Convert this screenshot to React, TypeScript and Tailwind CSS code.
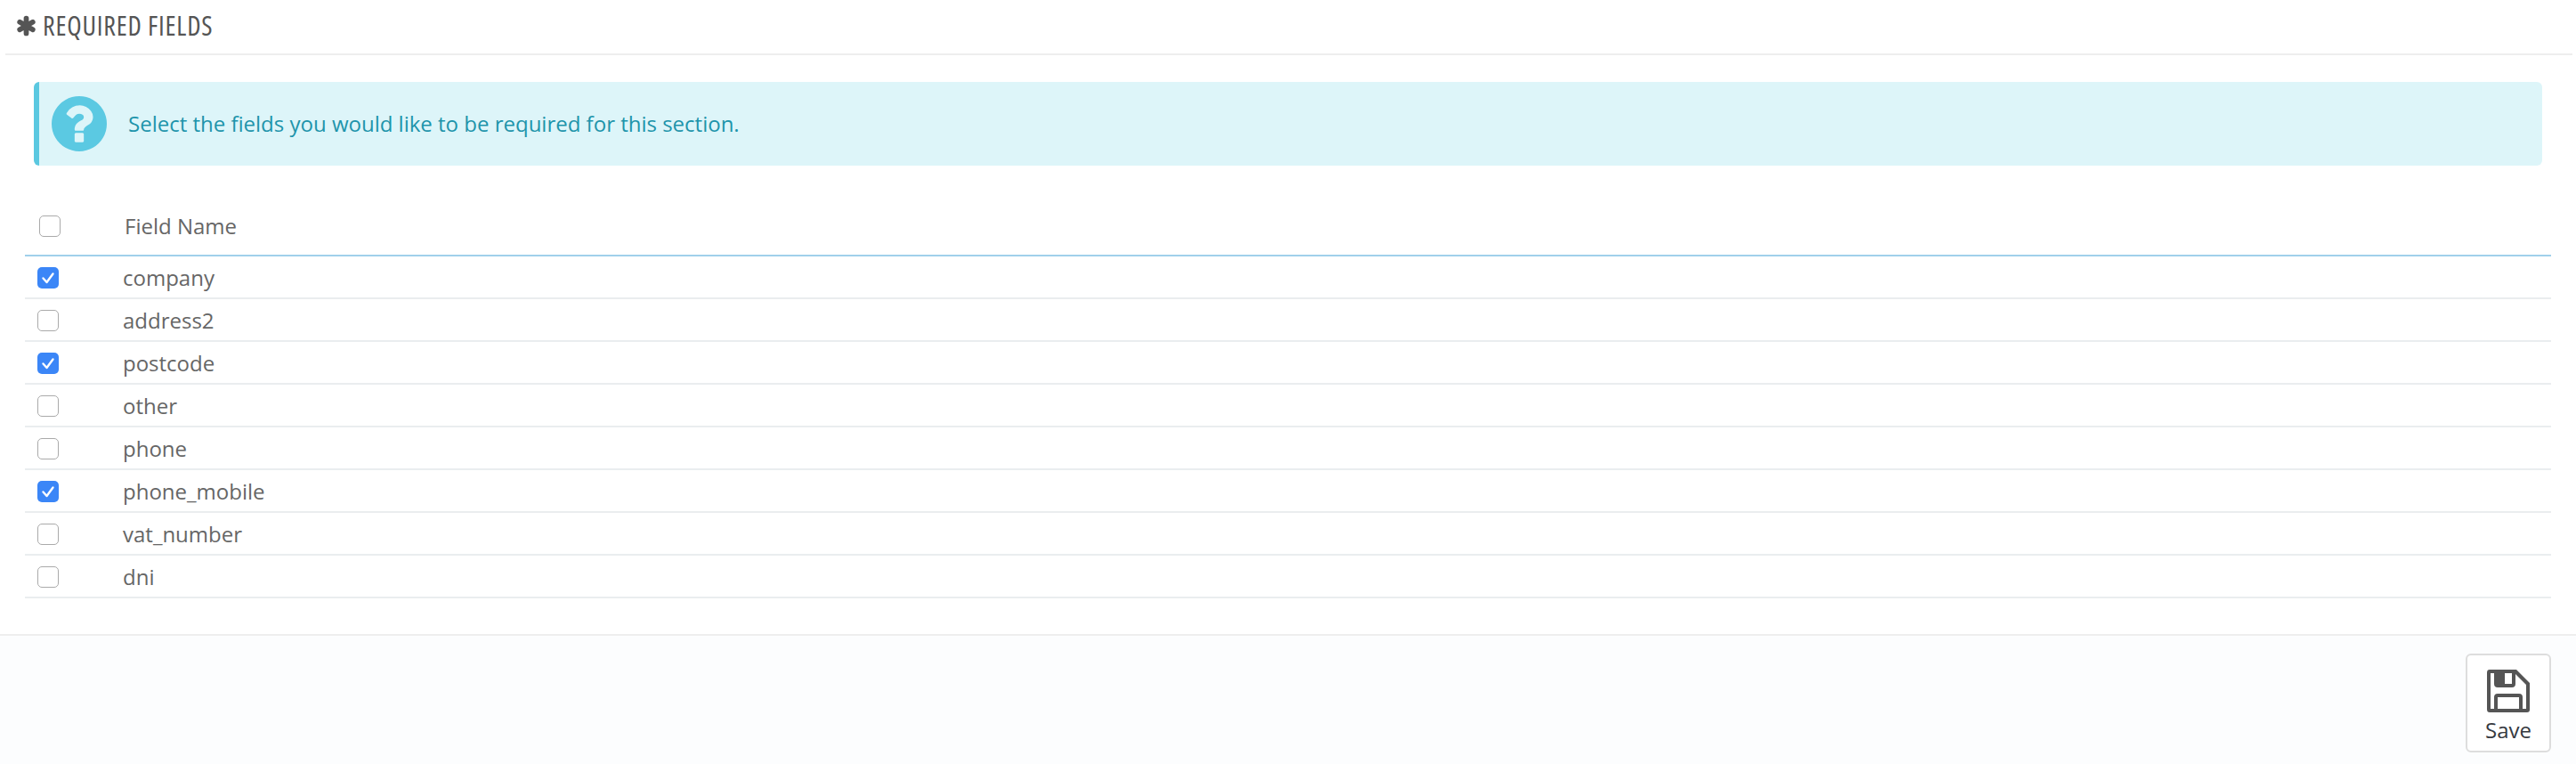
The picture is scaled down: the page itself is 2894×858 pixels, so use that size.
import React from "react";

const Q = "M1024 1376v-192q0-14-9-23t-23-9h-192q-14 0-23 9t-9 23v192q0 14 9 23t23 9h192q14 0 23-9t9-23zm256-672q0-88-55.500-163t-138.500-116-170-41q-243 0-371 213-15 24 8 42l132 100q7 6 19 6 16 0 25-12 53-68 86-92 34-24 86-24 48 0 85.500 26t37.500 59q0 38-20 61t-68 45q-63 28-115.500 86.500t-52.500 125.500v36q0 14 9 23t23 9h192q14 0 23-9t9-23q0-19 21.500-49.500t54.500-49.500q32-18 49-28.500t46-35 44.500-48 28-60.500 12.500-81zm384 192q0 209-103 385.500t-279.500 279.500-385.500 103-385.500-103-279.500-279.500-103-385.500 103-385.500 279.500-279.500 385.500-103 385.500 103 279.500 279.500 103 385.500z";

const fields: [string, boolean][] = [
  ["company", true],
  ["address2", false],
  ["postcode", true],
  ["other", false],
  ["phone", false],
  ["phone_mobile", true],
  ["vat_number", false],
  ["dni", false],
];

function Check({ checked }: { checked: boolean }) {
  if (checked)
    return (
      <div className="w-6 h-6 rounded-[5px] bg-[#3b86f7] flex items-center justify-center">
        <svg viewBox="0 0 24 24" className="w-6 h-6" fill="none" stroke="#fff" strokeWidth="2.4" strokeLinecap="round" strokeLinejoin="round">
          <path d="M6.500 12.500 L10.500 17 L17.500 7.500" />
        </svg>
      </div>
    );
  return <div className="w-6 h-6 rounded-[5px] bg-white border border-[#aaa]" />;
}

export default function App() {
  return (
    <div className="w-[2894px] h-[858px] bg-white flex flex-col font-['Open_Sans',sans-serif] text-[#555]">
      <div className="h-[62px] ml-[6px] mr-[4px] border-b-2 border-[#eee] flex items-center pl-[12px] pb-[2px] gap-[7px]">
        <svg viewBox="0 0 24 24" className="w-[23px] h-[24px]" fill="none" stroke="#555" strokeWidth="6" strokeLinecap="round">
          <path d="M12 3.200V20.800M4.400 7.600 19.600 16.400M19.600 7.600 4.400 16.400" />
        </svg>
        <span className="text-[30px] leading-none uppercase [font-stretch:75%] tracking-[0.8px]">Required Fields</span>
      </div>

      <div className="ml-[38px] mr-[38px] mt-[30px] h-[94px] bg-[#ddf5f9] border-l-[6px] border-[#5bc8e0] rounded-[6px] flex items-center pl-[14px] gap-[24px] text-[#1e94ab]">
        <svg viewBox="128 128 1536 1536" className="w-[62px] h-[62px]" fill="#5bc9e2">
          <path d={Q} />
        </svg>
        <span className="text-[24px] leading-none">Select the fields you would like to be required for this section.</span>
      </div>

      <div className="ml-[28px] mr-[28px] mt-[36px] flex-none">
        <div className="h-[66px] flex items-center border-b-2 border-[#a0d0eb]">
          <div className="w-[110px] pl-[16px] flex-none">
            <div className="w-6 h-6 rounded-[5px] bg-white border border-[#aaa]" />
          </div>
          <span className="text-[24px] leading-none pl-[2px] text-[#666]">Field Name</span>
        </div>
        {fields.map(([name, c]) => (
          <div key={name} className="h-[48px] pt-[2px] flex items-center border-b-2 border-[#eaedef]">
            <div className="w-[110px] pl-[14px] flex-none">
              <Check checked={c} />
            </div>
            <span className="text-[24px] leading-none text-[#666]">{name}</span>
          </div>
        ))}
      </div>

      <div className="mt-[40px] flex-1 bg-[#fcfdfe] border-t-2 border-[#eee] flex justify-end pr-[28px] pt-[20px]">
        <button className="w-[96px] h-[111px] bg-white border-2 border-[#ddd] rounded-[6px] flex flex-col items-center pt-[16px] text-[#363a41]">
          <svg viewBox="0 0 48 48" className="w-12 h-12" fill="#555" fillRule="evenodd">
            <path d="M3 0H33L48 15V45a3 3 0 0 1-3 3H3a3 3 0 0 1-3-3V3a3 3 0 0 1 3-3ZM12 31V44H36V31ZM8 31a4 4 0 0 1 4-4H36a4 4 0 0 1 4 4V44H44V17L32 5V16a4 4 0 0 1-4 4H12a4 4 0 0 1-4-4V4H4V44H8ZM20 4V16H28V4Z" />
          </svg>
          <span className="text-[24px] leading-none mt-[8px]">Save</span>
        </button>
      </div>
    </div>
  );
}
